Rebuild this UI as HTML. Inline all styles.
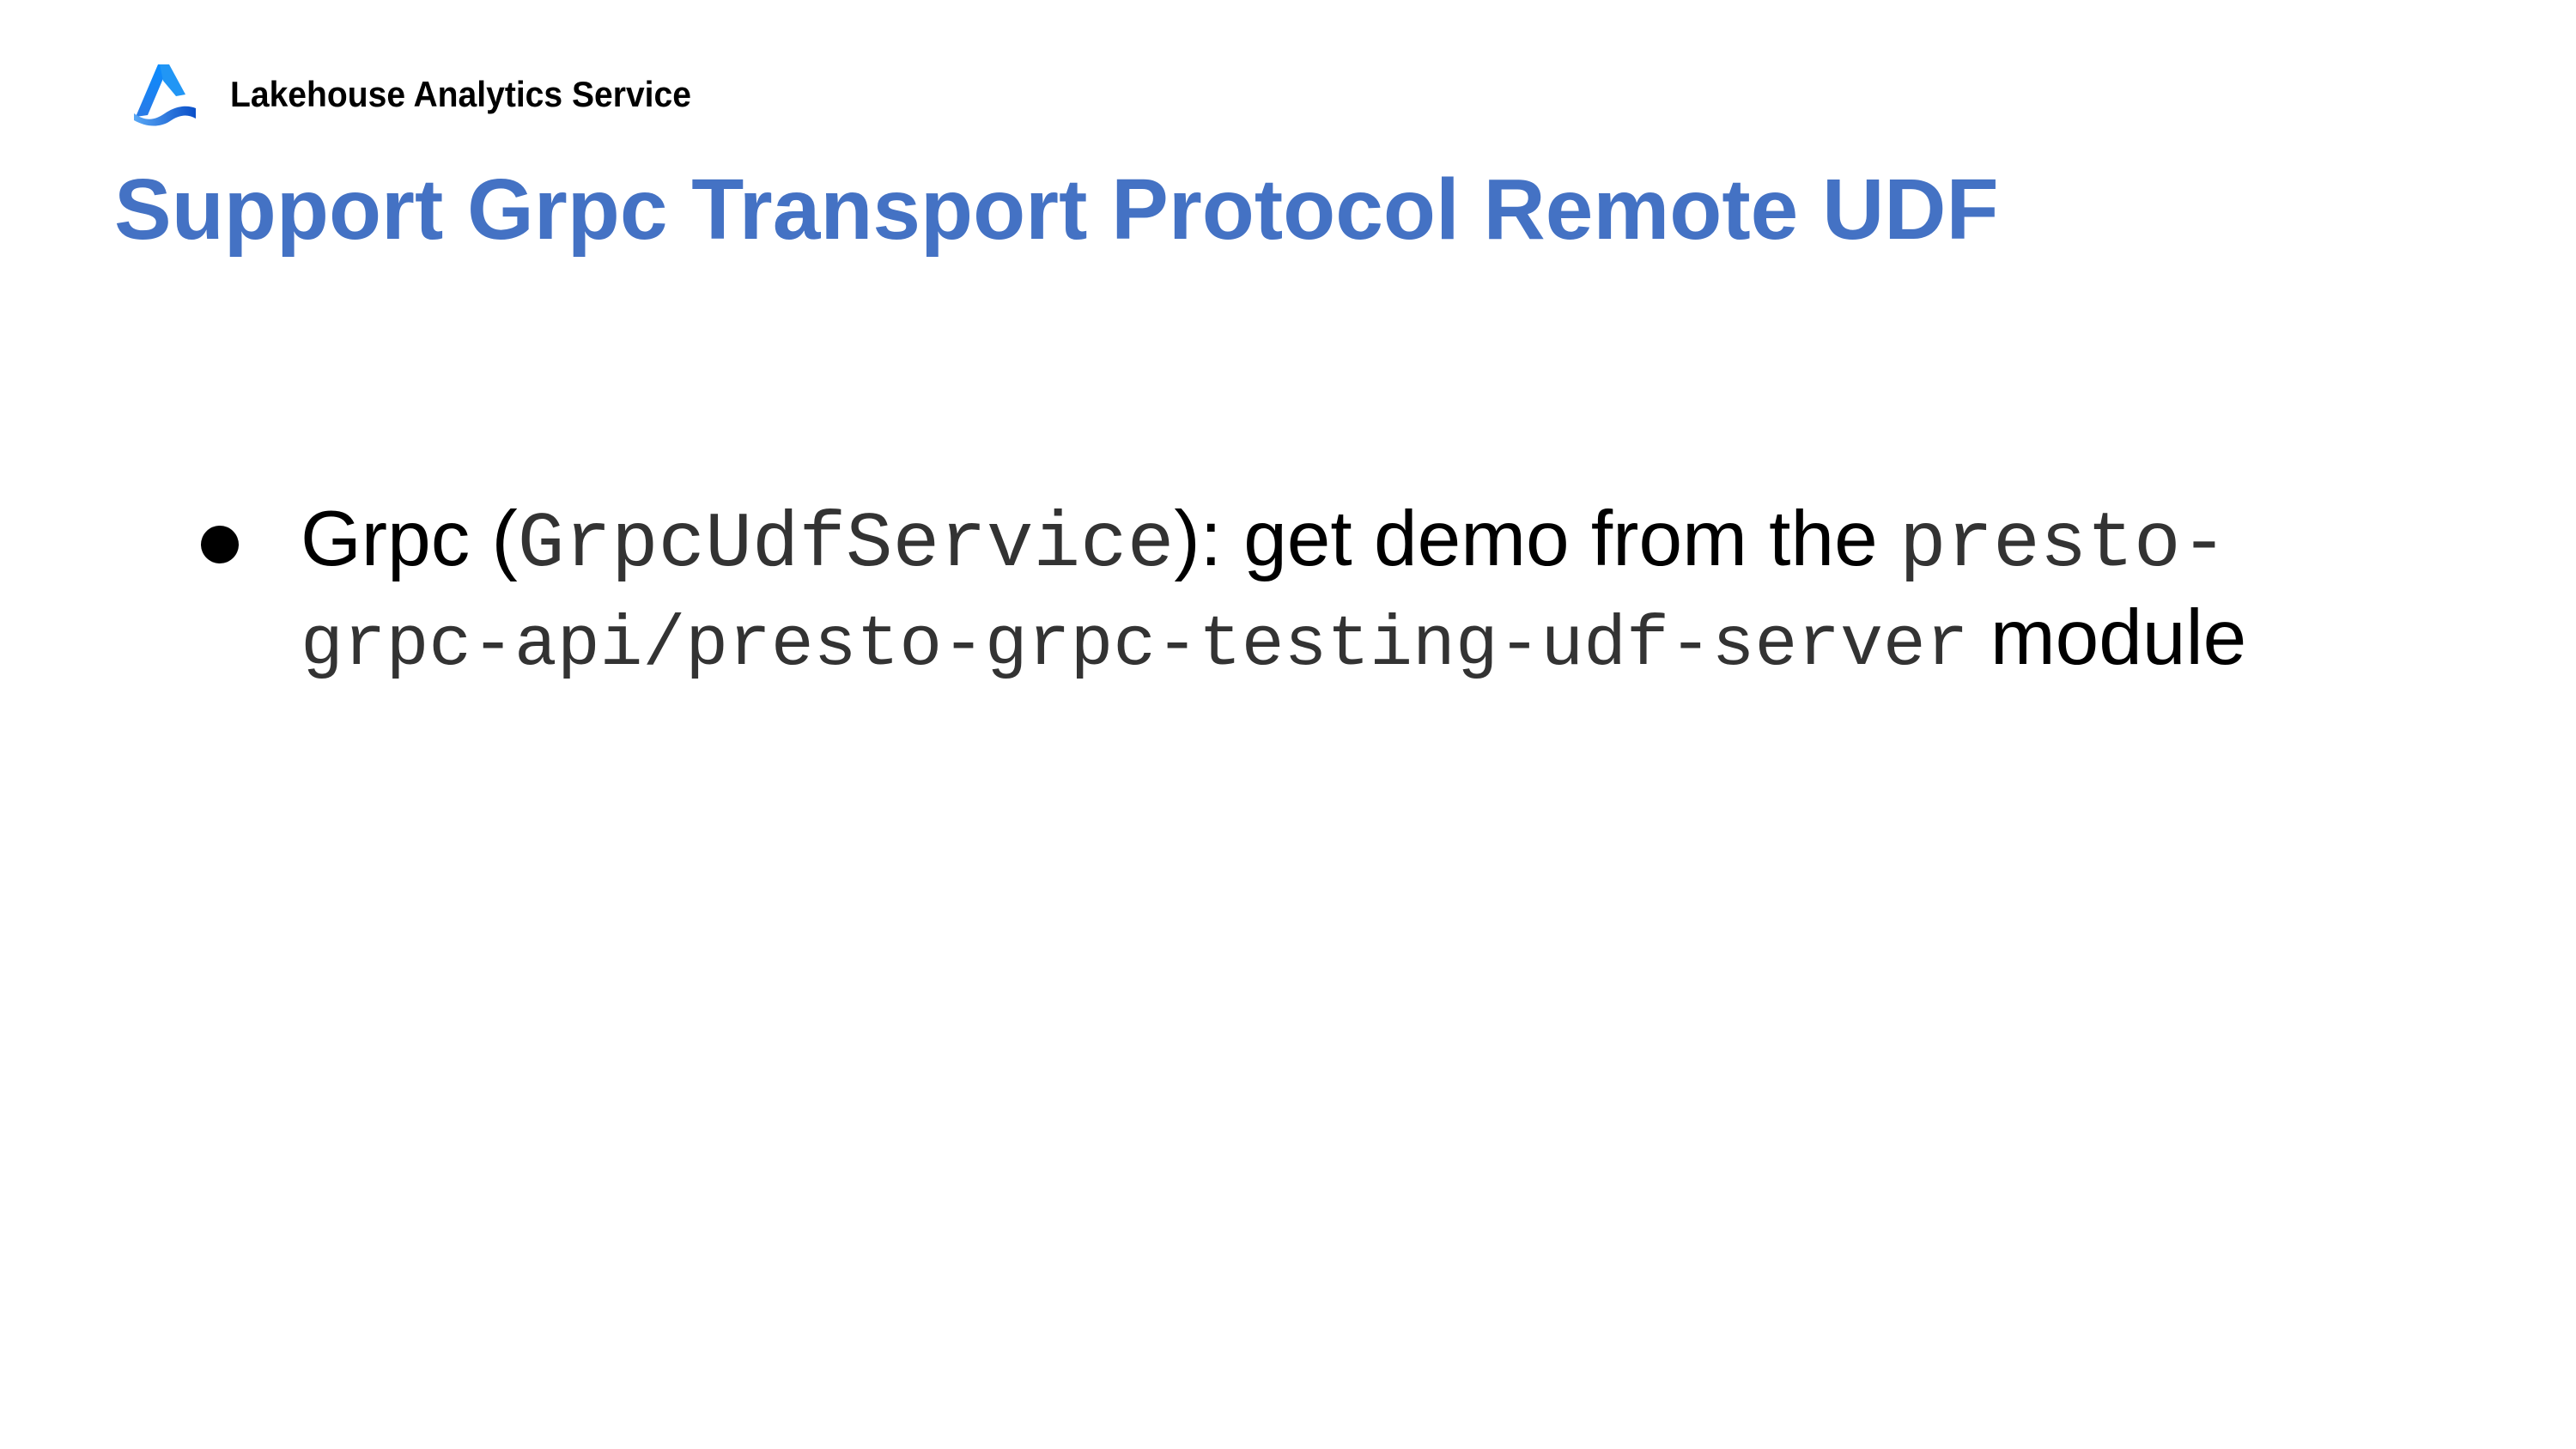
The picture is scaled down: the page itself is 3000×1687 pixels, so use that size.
<!DOCTYPE html>
<html><head><meta charset="utf-8"><style>
html,body{margin:0;padding:0;background:#fff;}
body{width:3000px;height:1687px;position:relative;overflow:hidden;font-family:"Liberation Sans",Arial,sans-serif;}
.hdr{position:absolute;left:268px;top:86px;font-size:42px;font-weight:bold;color:#000;white-space:nowrap;transform:scaleX(0.93);transform-origin:left top;}
.title{position:absolute;left:133px;top:184px;font-size:100px;font-weight:bold;color:#4472c4;white-space:nowrap;line-height:1.2;}
.body{position:absolute;left:350px;top:574px;font-size:91px;color:#000;line-height:108px;white-space:nowrap;}
.m{font-family:"Liberation Mono","Courier New",monospace;color:#333;}
.m1{font-size:91px;}
.m2{font-size:83px;}
.dot{position:absolute;left:234px;top:612px;width:44px;height:44px;border-radius:50%;background:#000;}
</style></head><body>
<svg style="position:absolute;left:150px;top:70px" width="90" height="80" viewBox="0 0 90 80">
<defs><linearGradient id="g1" x1="0" y1="0" x2="0" y2="1"><stop offset="0" stop-color="#0a8cff"/><stop offset="1" stop-color="#2a7ae6"/></linearGradient>
<linearGradient id="g2" x1="0" y1="0" x2="1" y2="0"><stop offset="0" stop-color="#5aa8f5"/><stop offset="1" stop-color="#0a4fc8"/></linearGradient></defs>
<path d="M34 5 L47 5 L22 64 L8 66 Z" fill="url(#g1)"/>
<path d="M36 5 L47 5 L66 40 L55 42 L40 24 Z" fill="#2196f5"/>
<path d="M6 62 C20 72 30 70 42 62 C55 53 68 52 78 56 L78 68 C68 62 58 64 48 71 C36 79 20 78 6 70 Z" fill="url(#g2)"/>
</svg>
<div class="hdr">Lakehouse Analytics Service</div>
<div class="title">Support Grpc Transport Protocol Remote UDF</div>
<div class="dot"></div>
<div class="body">Grpc (<span class="m m1">GrpcUdfService</span>): get demo from the <span class="m m1">presto-</span><br><span class="m m2">grpc-api/presto-grpc-testing-udf-server</span> module</div>
</body></html>
